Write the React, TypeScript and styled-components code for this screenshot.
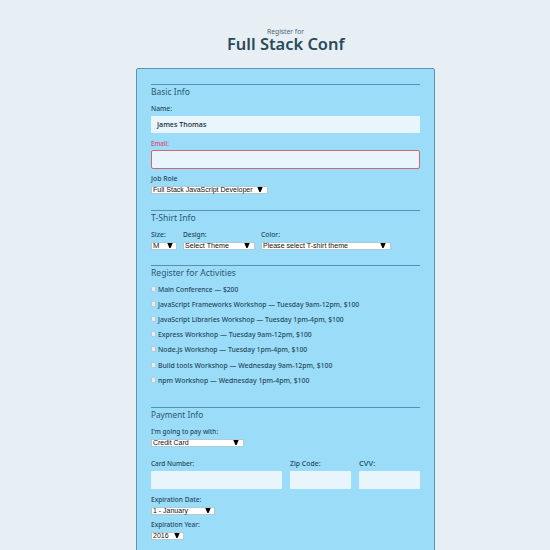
import React, { useLayoutEffect, useRef, useState } from "react";
import styled, { createGlobalStyle, css } from "styled-components";

const GlobalStyle = createGlobalStyle`
  *, *::before, *::after { box-sizing: border-box; }
  html, body { margin: 0; height: 550px; overflow: hidden; background: #e7eff5; }
  body { font-family: "Noto Sans", "Open Sans", sans-serif; color: #24495c; }
`;

const Page = styled.main`
  width: 550px;
  height: 550px;
  overflow: hidden;
  background: #e7eff5;
`;

const Header = styled.header`
  display: flex;
  flex-direction: column;
  align-items: flex-start;
  height: 68px;
  padding-top: 27px;
`;

const Subtitle = styled.p`
  margin: 0 0 0 267px;
  height: 8px;
  line-height: 9px;
  font-size: 6.2px;
  color: #4d6674;
`;

const Title = styled.h1`
  margin: 0 0 0 227px;
  height: 18px;
  line-height: 18px;
  font-size: 15.6px;
  font-weight: 600;
  color: #284a5b;
`;

const Form = styled.form`
  width: 299px;
  height: 500px;
  margin-left: 136px;
  padding: 15px 14px 0;
  border: 1px solid #5c93ae;
  border-radius: 2px;
  background: #9bdcf8;
`;

const Section = styled.section<{ $height: number }>`
  height: ${(p) => p.$height}px;
  border-top: 1px solid #5591b0;
`;

const Heading = styled.h2`
  margin: 0;
  height: 15px;
  line-height: 15px;
  font-size: 8.8px;
  font-weight: 400;
  color: #2b586e;
`;

const Label = styled.label<{ $gap?: number; $error?: boolean }>`
  display: block;
  height: 10px;
  line-height: 10px;
  margin-top: ${(p) => p.$gap ?? 0}px;
  font-size: 6.2px;
  font-weight: 500;
  color: ${(p) => (p.$error ? "#d9486a" : "#24495c")};
`;

const Field = styled.div<{ $error?: boolean }>`
  height: 17px;
  margin-top: 2px;
  padding-left: 6px;
  line-height: 17px;
  font-size: 6.4px;
  font-weight: 500;
  color: #10242f;
  border-radius: 1px;
  background: #e8f5fc;
  ${(p) =>
    p.$error &&
    css`
      height: 19px;
      margin-top: 1px;
      border: 1px solid #d8646f;
      border-radius: 2px;
    `}
`;

const SelectBox = styled.div<{ $width: number; $arrow: number }>`
  display: grid;
  grid-template-columns: ${(p) => p.$arrow}px 6px;
  align-items: start;
  justify-items: start;
  width: ${(p) => p.$width}px;
  height: 8px;
  margin-top: 2px;
  padding-left: 1px;
  border: 1px solid #b2c9d3;
  background: #fff;
  font: 6.4px/6px "Liberation Sans", Arial, sans-serif;
  color: #111;
`;

const Arrow = styled.svg`
  display: block;
  width: 6px;
  height: 5px;
  fill: #000;
`;

const ShirtRow = styled.div`
  display: grid;
  grid-template-columns: 26px 72px 130px;
  column-gap: 6px;
  margin-top: 4px;
`;

const CardRow = styled.div`
  display: grid;
  grid-template-columns: 131px 61px 61px;
  column-gap: 8px;
  margin-top: 12px;

  ${Field} {
    height: 18px;
  }
`;

const Activities = styled.ul`
  list-style: none;
  margin: 1px 0 0;
  padding: 0;
`;

const Activity = styled.li`
  display: flex;
  align-items: center;
  height: 15.1px;
  font-size: 6.2px;
  font-weight: 500;
  line-height: 15px;
  color: #24495c;
`;

const Check = styled.span`
  width: 5px;
  height: 6px;
  margin: 0 2px 1px 0;
  border: 1px solid #b9cad2;
  border-radius: 1px;
  background: #e2eef4;
`;

const FitBox = styled.span`
  display: inline-block;
  vertical-align: top;
  white-space: nowrap;
  transform-origin: 0 50%;
`;

/* Stretches a run of text horizontally to the given width. */
function Fit({ w, children }: { w: number; children: string }) {
  const ref = useRef<HTMLSpanElement>(null);
  const [scale, setScale] = useState(1);
  useLayoutEffect(() => {
    if (ref.current) setScale(w / ref.current.offsetWidth);
  }, [w, children]);
  return (
    <FitBox ref={ref} style={{ transform: `scaleX(${scale})` }}>
      {children}
    </FitBox>
  );
}

type SelectProps = { width: number; arrow: number; text: string; w: number };

function Select({ width, arrow, text, w }: SelectProps) {
  return (
    <SelectBox $width={width} $arrow={arrow}>
      <Fit w={w}>{text}</Fit>
      <Arrow viewBox="0 0 6 5">
        <path d="M.3 0h5.4L3.6 5H2.4z" />
      </Arrow>
    </SelectBox>
  );
}

const activities: [string, number][] = [
  ["Main Conference — $200", 80.5],
  ["JavaScript Frameworks Workshop — Tuesday 9am-12pm, $100", 201],
  ["JavaScript Libraries Workshop — Tuesday 1pm-4pm, $100", 185.5],
  ["Express Workshop — Tuesday 9am-12pm, $100", 154],
  ["Node.js Workshop — Tuesday 1pm-4pm, $100", 149],
  ["Build tools Workshop — Wednesday 9am-12pm, $100", 174],
  ["npm Workshop — Wednesday 1pm-4pm, $100", 151],
];

export default function App() {
  return (
    <Page>
      <GlobalStyle />
      <Header>
        <Subtitle><Fit w={37}>Register for</Fit></Subtitle>
        <Title><Fit w={118}>Full Stack Conf</Fit></Title>
      </Header>
      <Form>
        <Section $height={126}>
          <Heading><Fit w={38.5}>Basic Info</Fit></Heading>
          <Label $gap={4}><Fit w={20.5}>Name:</Fit></Label>
          <Field><Fit w={49}>James Thomas</Fit></Field>
          <Label $gap={6} $error><Fit w={18}>Email:</Fit></Label>
          <Field $error />
          <Label $gap={5}><Fit w={26.5}>Job Role</Fit></Label>
          <Select width={117} arrow={104} text="Full Stack JavaScript Developer" w={100} />
        </Section>
        <Section $height={55}>
          <Heading><Fit w={45}>T-Shirt Info</Fit></Heading>
          <ShirtRow>
            <div>
              <Label><Fit w={14.5}>Size:</Fit></Label>
              <Select width={26} arrow={14} text="M" w={6} />
            </div>
            <div>
              <Label><Fit w={23.5}>Design:</Fit></Label>
              <Select width={72} arrow={59} text="Select Theme" w={43.5} />
            </div>
            <div>
              <Label><Fit w={18.5}>Color:</Fit></Label>
              <Select width={130} arrow={117} text="Please select T-shirt theme" w={85} />
            </div>
          </ShirtRow>
        </Section>
        <Section $height={142}>
          <Heading><Fit w={84.5}>Register for Activities</Fit></Heading>
          <Activities>
            {activities.map(([text, w]) => (
              <Activity key={text}>
                <Check />
                <Fit w={w}>{text}</Fit>
              </Activity>
            ))}
          </Activities>
        </Section>
        <Section $height={160}>
          <Heading><Fit w={52.5}>Payment Info</Fit></Heading>
          <Label $gap={4}><Fit w={67}>I'm going to pay with:</Fit></Label>
          <Select width={93} arrow={80} text="Credit Card" w={36} />
          <CardRow>
            <div>
              <Label><Fit w={43.5}>Card Number:</Fit></Label>
              <Field />
            </div>
            <div>
              <Label><Fit w={30}>Zip Code:</Fit></Label>
              <Field />
            </div>
            <div>
              <Label><Fit w={16}>CVV:</Fit></Label>
              <Field />
            </div>
          </CardRow>
          <Label $gap={5.5}><Fit w={50}>Expiration Date:</Fit></Label>
          <Select width={64} arrow={52} text="1 - January" w={35} />
          <Label $gap={5}><Fit w={48.5}>Expiration Year:</Fit></Label>
          <Select width={33} arrow={21} text="2016" w={15.5} />
        </Section>
      </Form>
    </Page>
  );
}
